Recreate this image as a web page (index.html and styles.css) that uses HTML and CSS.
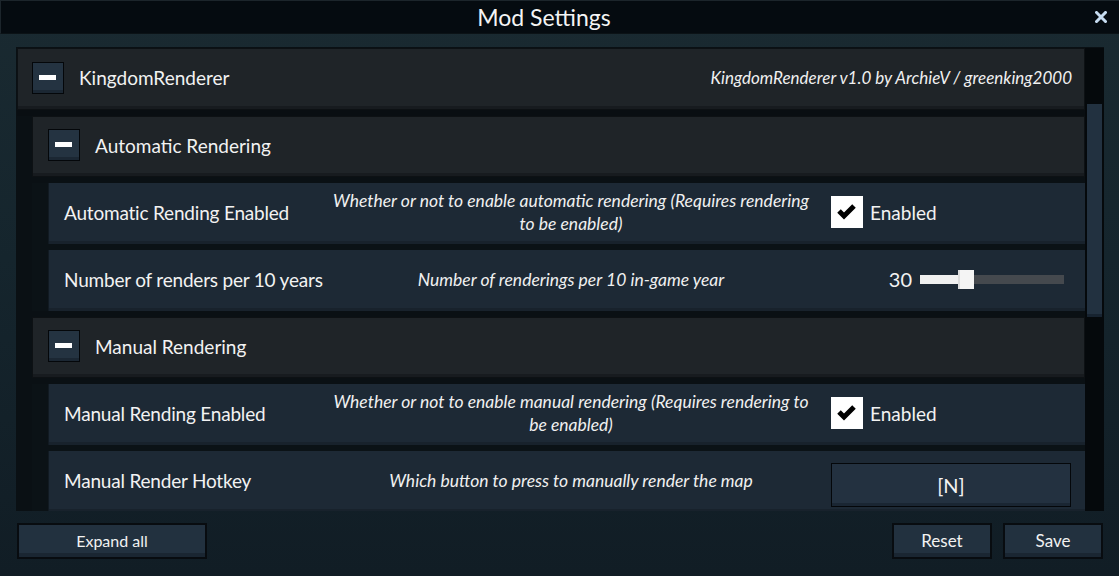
FILE: index.html
```html
<!DOCTYPE html>
<html lang="en">
<head>
  <meta charset="UTF-8">
  <title>Mod Settings</title>
  <link rel="stylesheet" href="styles.css">
</head>
<body>
  <div class="window">
    <header class="titlebar">
      <span></span>
      <h1>Mod Settings</h1>
      <button class="close" aria-label="Close">
        <svg width="12" height="12" viewBox="0 0 12 12"><path d="M1.5 1.5 L10.5 10.5 M10.5 1.5 L1.5 10.5" stroke="#c6dbf0" stroke-width="3" stroke-linecap="square"/></svg>
      </button>
    </header>

    <main class="content">
      <div class="panel">
        <div class="panel-inner">

          <!-- Mod group -->
          <section class="group">
            <div class="group-head">
              <span class="toggle"></span>
              <h2>KingdomRenderer</h2>
              <span class="credit">KingdomRenderer v1.0 by ArchieV / greenking2000</span>
            </div>
            <div class="group-body">

              <section class="group">
                <div class="group-head sub">
                  <span class="toggle"></span>
                  <h2>Automatic Rendering</h2>
                </div>
                <div class="group-body inner">
                  <div class="setting">
                    <span class="label">Automatic Rending Enabled</span>
                    <p class="desc">Whether or not to enable automatic rendering (Requires rendering to be enabled)</p>
                    <div class="control">
                      <span class="checkbox">
                        <svg width="32" height="32" viewBox="0 0 32 32"><polyline points="8,15 13,20 23,10" fill="none" stroke="#000" stroke-width="5"/></svg>
                      </span>
                      <span class="check-label">Enabled</span>
                    </div>
                  </div>
                  <div class="setting">
                    <span class="label">Number of renders per 10 years</span>
                    <p class="desc">Number of renderings per 10 in-game year</p>
                    <div class="control slider-control">
                      <span class="slider-value">30</span>
                      <div class="slider">
                        <div class="slider-fill" style="width: 38px"></div>
                        <div class="slider-thumb"></div>
                      </div>
                    </div>
                  </div>
                </div>
              </section>

              <section class="group">
                <div class="group-head sub">
                  <span class="toggle"></span>
                  <h2>Manual Rendering</h2>
                </div>
                <div class="group-body inner">
                  <div class="setting">
                    <span class="label">Manual Rending Enabled</span>
                    <p class="desc">Whether or not to enable manual rendering (Requires rendering to be enabled)</p>
                    <div class="control">
                      <span class="checkbox">
                        <svg width="32" height="32" viewBox="0 0 32 32"><polyline points="8,15 13,20 23,10" fill="none" stroke="#000" stroke-width="5"/></svg>
                      </span>
                      <span class="check-label">Enabled</span>
                    </div>
                  </div>
                  <div class="setting">
                    <span class="label">Manual Render Hotkey</span>
                    <p class="desc">Which button to press to manually render the map</p>
                    <div class="control">
                      <button class="hotkey">[N]</button>
                    </div>
                  </div>
                </div>
              </section>

            </div>
          </section>

        </div>
        <div class="scrollbar"><div class="scroll-thumb"></div></div>
      </div>
    </main>

    <footer class="footer">
      <button class="btn expand">Expand all</button>
      <div class="footer-right">
        <button class="btn small">Reset</button>
        <button class="btn small">Save</button>
      </div>
    </footer>
  </div>
</body>
</html>
```

FILE: styles.css
```css
* { margin: 0; padding: 0; box-sizing: border-box; font-family: 'Lato', 'Open Sans', sans-serif; }
body {
  width: 1119px;
  height: 576px;
  overflow: hidden;
  background: linear-gradient(180deg, #1a2a31 0%, #15252d 45%, #111d25 100%);
  color: #f2f2f2;
}
button { font-family: inherit; color: inherit; cursor: pointer; }

/* Title bar */
.titlebar {
  display: grid;
  grid-template-columns: 1fr auto 1fr;
  align-items: center;
  height: 34px;
  background-color: #050b10;
  border-top: 1px solid #1c252b;
  border-left: 1px solid #1c252b;
  border-bottom: 1px solid #0b1216;
}
.titlebar h1 {
  font-size: 23px;
  font-weight: 400;
  color: #f4f4f4;
  margin: -1px 32px 0 0;
}
.close {
  justify-self: end;
  margin-right: 12px;
  width: 12px;
  height: 12px;
  border: none;
  background: none;
  display: flex;
}

/* Scroll panel */
.content { padding: 13px 15px 0 16px; }
.panel {
  display: flex;
  height: 464px;
  border-top: 1px solid #0a1014;
  border-left: 1px solid #0a1014;
  background-color: #090e12;
}
.panel-inner { flex: 1; overflow: hidden; }
.scrollbar {
  width: 19px;
  background-color: #05090c;
  padding: 56px 2px 0 2px;
}
.scroll-thumb {
  height: 213px;
  background-color: #223140;
  border-bottom: 3px solid #172330;
}

/* Groups */
.group-head {
  display: flex;
  align-items: center;
  height: 62px;
  padding: 0 12px 3px 14px;
  background-color: #1f2428;
  border: 1px solid #0d1114;
  box-shadow: inset 0 -3px 0 #171b1f;
}
.group-head.sub { height: 61px; padding-left: 15px; }
.group-head h2 {
  font-size: 19px;
  font-weight: 400;
  margin-left: 15px;
  color: #f2f2f2;
  white-space: nowrap;
}
.credit {
  margin-left: auto;
  font-size: 17px;
  font-style: italic;
  color: #f0f0f0;
}
.toggle {
  position: relative;
  width: 32px;
  height: 32px;
  flex-shrink: 0;
  background-color: #243341;
  border: 1px solid #04070a;
  box-shadow: inset 0 -3px 0 #1b2733;
}
.toggle::after {
  content: '';
  position: absolute;
  left: 6px;
  top: 12px;
  width: 17px;
  height: 5px;
  background-color: #fff;
}
.group-body {
  padding-left: 15px;
  background-color: #0a1014;
}
.group-body.inner { padding-left: 16px; background-color: #0b1216; }
.group-body > * { margin-top: 6px; }

/* Setting rows */
.setting {
  display: grid;
  grid-template-columns: 277px 490px 1fr;
  align-items: center;
  height: 61px;
  padding-bottom: 3px;
  background-color: #1d2935;
  border-left: 1px solid #111a22;
  box-shadow: inset 0 -3px 0 #18222c;
}
.label {
  padding-left: 15px;
  font-size: 19px;
  letter-spacing: -0.2px;
  white-space: nowrap;
  color: #f2f2f2;
}
.desc {
  font-size: 17.5px;
  font-style: italic;
  line-height: 23px;
  text-align: center;
  color: #f0f0f0;
}
.control {
  display: flex;
  align-items: center;
  padding-left: 15px;
}
.checkbox {
  width: 32px;
  height: 32px;
  background-color: #fff;
  display: flex;
}
.check-label {
  margin-left: 7px;
  font-size: 19px;
}

/* Slider */
.slider-control {
  justify-content: flex-end;
  padding-right: 21px;
}
.slider-value { font-size: 20px; margin-right: 8px; }
.slider {
  position: relative;
  width: 144px;
  height: 9px;
  background-color: #45494e;
}
.slider-fill { height: 100%; background-color: #f0f0f0; }
.slider-thumb {
  position: absolute;
  left: 38px;
  top: -5px;
  width: 16px;
  height: 19px;
  background-color: #f4f4f4;
  border-left: 2px solid #dcdcdc;
}

/* Hotkey button */
.hotkey {
  width: 240px;
  height: 44px;
  margin-top: 9px;
  font-size: 20px;
  background-color: #233140;
  border: 1px solid #04070a;
  box-shadow: inset 0 -3px 0 #1a2633;
}

/* Footer */
.footer {
  display: flex;
  justify-content: space-between;
  padding: 12px 16px 0 17px;
}
.footer-right { display: flex; gap: 11px; }
.btn {
  height: 36px;
  background-color: #22313f;
  border: 2px solid #080c10;
  box-shadow: inset 0 -4px 0 #1a2632;
  font-size: 17px;
  padding-bottom: 2px;
}
.btn.expand { width: 190px; font-size: 16px; }
.btn.small { width: 100px; }
```
